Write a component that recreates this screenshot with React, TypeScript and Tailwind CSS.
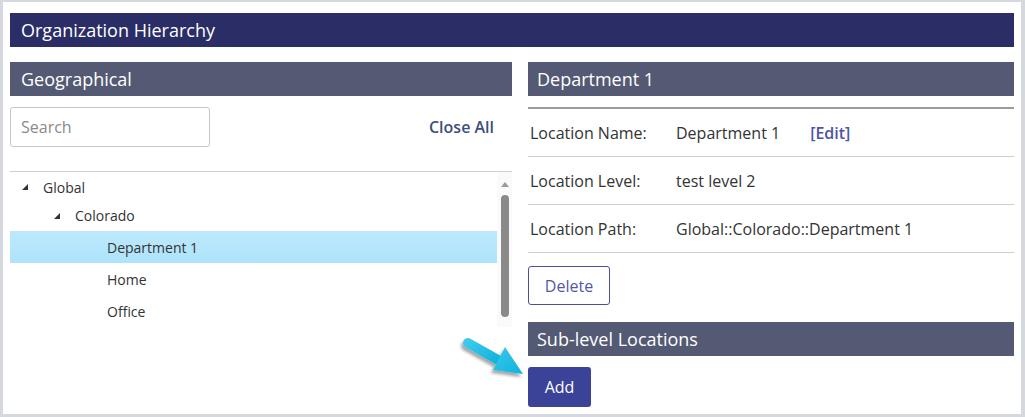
import React from "react";

const font = { fontFamily: '"Open Sans", "Noto Sans", sans-serif' };

function Caret() {
  return (
    <svg width="6" height="6" viewBox="0 0 6 6" className="shrink-0">
      <polygon points="6,0 6,6 0,6" fill="#333" />
    </svg>
  );
}

function TreeRow({ label, indent, caret, selected, h }: { label: string; indent: number; caret?: boolean; selected?: boolean; h: string }) {
  return (
    <div className={`flex items-center ${h} ${selected ? "bg-gradient-to-b from-[#bde9fd] to-[#ade3fb]" : ""}`} style={{ paddingLeft: indent }}>
      {caret && (
        <span className="mr-[15px] flex w-[6px]">
          <Caret />
        </span>
      )}
      <span className="text-[14px] text-[#333]">{label}</span>
    </div>
  );
}

function DetailRow({ label, value, edit }: { label: string; value: string; edit?: boolean }) {
  return (
    <div className="flex h-[48px] items-center border-b border-[#cfcfcf] pl-[2px] text-[16px] text-[#333]">
      <span className="w-[146px]">{label}</span>
      <span>{value}</span>
      {edit && <span className="ml-[30px] font-semibold text-[#4c54a4]">[Edit]</span>}
    </div>
  );
}

function Arrow() {
  return (
    <svg className="absolute left-[450px] top-[327px]" width="78" height="55" viewBox="0 0 78 55">
      <defs>
        <linearGradient id="ag" x1="0" y1="0" x2="1" y2="1">
          <stop offset="0" stopColor="#3cc8ec" />
          <stop offset="1" stopColor="#0fb2dc" />
        </linearGradient>
        <filter id="sh" x="-20%" y="-20%" width="150%" height="150%">
          <feDropShadow dx="-2" dy="3" stdDeviation="1.6" floodColor="#000" floodOpacity="0.35" />
        </filter>
      </defs>
      <g filter="url(#sh)">
        <line x1="15" y1="14" x2="47" y2="32" stroke="url(#ag)" strokeWidth="10" strokeLinecap="round" />
        <polygon points="52,18 40,41 70,45" fill="url(#ag)" />
      </g>
    </svg>
  );
}

export default function App() {
  return (
    <div className="relative h-[417px] w-[1025px] overflow-hidden border-t-2 border-r-[4px] border-b-[3px] border-l-[3px] border-[#d5d8dc] bg-white px-[7px] pt-[11px]" style={font}>
      <div className="flex h-[34px] items-center bg-[#2a2d66] pl-[11px] text-[18px] text-white">Organization Hierarchy</div>

      <div className="mt-[15px] flex gap-[16px]">
        {/* left: tree */}
        <div className="w-[502px]">
          <div className="flex h-[34px] items-center bg-[#545a74] pl-[11px] text-[18px] text-white">Geographical</div>
          <div className="mt-[11px] flex items-center justify-between">
            <div className="flex h-[40px] w-[200px] items-center rounded-[3px] border border-[#c4c6cc] pl-[10px] text-[16px] text-[#8a8a8a]">Search</div>
            <span className="mr-[18px] text-[16px] font-semibold text-[#3f4e80]">Close All</span>
          </div>
          <div className="mt-[24px] border-t border-[#cfcfcf]" />
          <div className="flex">
            <div className="flex-1 pt-[2px]">
              <TreeRow label="Global" indent={12} caret h="h-[26px]" />
              <TreeRow label="Colorado" indent={44} caret h="h-[31px]" />
              <TreeRow label="Department 1" indent={97} selected h="h-[32px]" />
              <TreeRow label="Home" indent={97} h="h-[32px]" />
              <TreeRow label="Office" indent={97} h="h-[32px]" />
            </div>
            <div className="flex w-[15px] flex-col items-center bg-[#fafafa] pt-[10px]">
              <svg width="8" height="5" viewBox="0 0 8 5">
                <polygon points="4,0 8,5 0,5" fill="#9a9a9a" />
              </svg>
              <div className="mt-[8px] h-[122px] w-[8px] rounded-full bg-[#8a8a8a]" />
            </div>
          </div>
        </div>

        {/* right: details */}
        <div className="flex-1">
          <div className="flex h-[34px] items-center bg-[#545a74] pl-[9px] text-[18px] text-white">Department 1</div>
          <div className="mt-[11px] border-t-2 border-[#9c9c9c]" />
          <DetailRow label="Location Name:" value="Department 1" edit />
          <DetailRow label="Location Level:" value="test level 2" />
          <DetailRow label="Location Path:" value="Global::Colorado::Department 1" />
          <div className="mt-[13px] flex h-[39px] w-[82px] items-center justify-center rounded-[3px] border border-[#4b4f9e] text-[16px] text-[#5357a3]">Delete</div>
          <div className="mt-[17px] flex h-[34px] items-center bg-[#545a74] pl-[9px] text-[18px] text-white">Sub-level Locations</div>
          <div className="mt-[11px] flex h-[40px] w-[63px] items-center justify-center rounded-[3px] bg-[#3b4398] text-[16px] text-white">Add</div>
        </div>
      </div>

      <Arrow />
    </div>
  );
}
